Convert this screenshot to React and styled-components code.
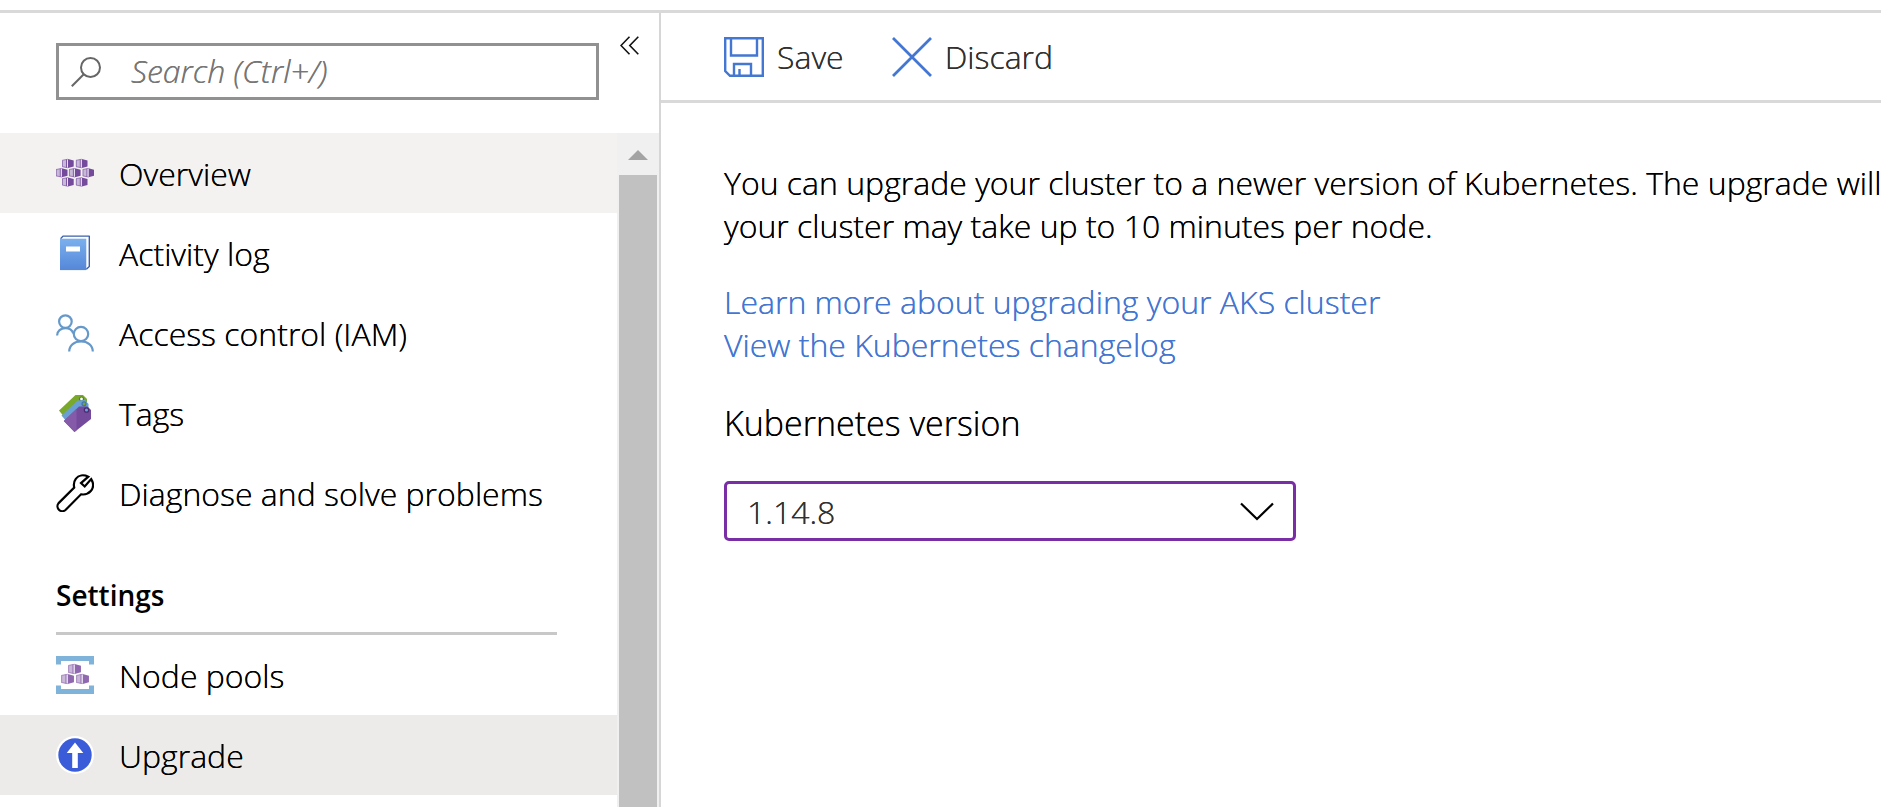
import React from "react";
import styled, { createGlobalStyle } from "styled-components";

const GlobalStyle = createGlobalStyle`
  * { box-sizing: border-box; }
  html, body { margin: 0; }
  body {
    background: #fff;
    color: #000;
    font-family: "Segoe UI", "Open Sans", "Noto Sans", sans-serif;
    font-size: 32px;
    font-weight: 350;
    line-height: 43px;
    text-shadow: 0 0 0 currentColor;
    overflow: hidden;
  }
  button, input, select { font: inherit; text-shadow: inherit; }
`;

const Page = styled.div`
  display: flex;
  flex-direction: column;
  height: 100vh;
  padding-top: 10px;
`;

const Shell = styled.div`
  flex: 1;
  min-height: 0;
  display: flex;
  border-top: 3px solid #d9d9d9;
`;

const Sidebar = styled.aside`
  flex: 0 0 661px;
  display: flex;
  flex-direction: column;
  border-right: 2px solid #d6d6d6;
`;

const SidebarHeader = styled.div`
  flex: none;
  display: flex;
  align-items: flex-start;
  gap: 21px;
  height: 120px;
  padding: 23px 20px 0 56px;
`;

const SearchBox = styled.label`
  flex: 1;
  display: flex;
  align-items: center;
  gap: 30px;
  height: 57px;
  margin-top: 7px;
  padding-left: 12px;
  border: 3px solid #919191;
`;

const SearchInput = styled.input`
  flex: 1;
  min-width: 0;
  padding: 0 0 2px;
  border: 0;
  outline: 0;
  background: transparent;
  &::placeholder { color: #767676; font-style: italic; opacity: 1; }
`;

const IconButton = styled.button`
  display: flex;
  padding: 0;
  border: 0;
  background: none;
`;

const SidebarBody = styled.div`
  flex: 1;
  min-height: 0;
  display: flex;
`;

const Nav = styled.nav`
  flex: 1;
  overflow: hidden;
`;

const NavItem = styled.a`
  display: flex;
  align-items: center;
  gap: 25px;
  height: 80px;
  padding-left: 56px;
  color: #000;
  text-decoration: none;
  background: ${(p) => p.$fill || "transparent"};
  svg { flex: none; }
`;

const SectionTitle = styled.h2`
  margin: 0 60px 0 56px;
  padding: 41px 0 15px;
  border-bottom: 3px solid #c8c8c8;
  font-size: 28px;
  font-weight: 600;
  text-shadow: none;
`;

const ScrollTrack = styled.div`
  flex: 0 0 42px;
  display: flex;
  flex-direction: column;
  align-items: center;
  padding: 0 2px;
  background: #f0f0f0;
`;

const ScrollArrow = styled.button`
  display: flex;
  align-items: center;
  justify-content: center;
  width: 100%;
  height: 42px;
  padding: 2px 0 0;
  border: 0;
  background: none;
`;

const ScrollThumb = styled.div`
  flex: 1;
  width: 100%;
  background: #c1c1c1;
`;

const Main = styled.main`
  flex: 1;
  min-width: 0;
  overflow: hidden;
`;

const Toolbar = styled.div`
  display: flex;
  align-items: center;
  gap: 48px;
  height: 90px;
  padding-left: 63px;
  border-bottom: 3px solid #d9d9d9;
`;

const ToolButton = styled.button`
  display: flex;
  align-items: center;
  gap: 13px;
  padding: 0;
  border: 0;
  background: none;
  color: #323130;
`;

const Content = styled.section`
  padding: 58px 0 0 63px;
`;

const Intro = styled.p`
  margin: 0 0 33px;
  white-space: nowrap;
`;

const Links = styled.div`
  display: flex;
  flex-direction: column;
  align-items: flex-start;
  margin-bottom: 36px;
`;

const Link = styled.a`
  color: #4377d2;
  text-decoration: none;
`;

const FieldLabel = styled.label`
  display: block;
  margin-bottom: 36px;
  font-size: 34px;
`;

const SelectWrap = styled.div`
  position: relative;
  width: 572px;
  max-width: 100%;
  svg { position: absolute; right: 22px; top: 20px; pointer-events: none; }
`;

const Select = styled.select`
  display: block;
  width: 100%;
  height: 60px;
  padding: 0 60px 0 20px;
  border: 3px solid #7a2ea6;
  border-radius: 5px;
  outline: 0;
  appearance: none;
  background: #fff;
  color: #323130;
`;

function Pod({ x, y, scale = 1, dark = "#744a9c" }) {
  return (
    <g transform={`translate(${x} ${y}) scale(${scale})`}>
      <path d="M0 1.4 5.500 0v9L0 7.700z" fill="#c9b9d9" />
      <path d="M5.800 0 11.500 1.500v6.100L5.800 9z" fill={dark} />
      <path d="M.3 1.400v6.200M0 1.300 5.800.2M0 7.700l5.800 1.100" stroke={dark} strokeWidth=".6" fill="none" />
      <path d="M4.300 .6v7.900" stroke={dark} strokeWidth=".9" />
      <path d="M5.300 .6v7.900" stroke="#efe9f5" strokeWidth=".8" />
    </g>
  );
}

const OverviewIcon = () => (
  <svg width="38" height="38" viewBox="0 0 38 38" aria-hidden="true">
    <Pod x={6.2} y={5} />
    <Pod x={20} y={5} />
    <Pod x={0} y={14.2} />
    <Pod x={13.1} y={14.2} />
    <Pod x={26.7} y={14.2} />
    <Pod x={6.2} y={23.4} />
    <Pod x={20} y={23.4} />
  </svg>
);

const LogIcon = () => (
  <svg width="38" height="38" viewBox="0 0 38 38" aria-hidden="true">
    <defs>
      <linearGradient id="cover" x1="0" y1="0" x2="0" y2="1">
        <stop offset="0" stopColor="#7bb0ee" />
        <stop offset="1" stopColor="#5587d8" />
      </linearGradient>
    </defs>
    <path d="M4.6 4.5 7 2.1h26.3v30.4l-2.8 2.9V4.9z" fill="#fff" />
    <path d="M4.6 4.8 7 2.1h26.3v30.4l-3 2.8" fill="none" stroke="#3a62ab" strokeWidth="1.4" strokeLinejoin="round" />
    <path d="M4 4.7h26.3v31.4H4z" fill="url(#cover)" />
    <path d="M10 12.5h14v5H10z" fill="#fff" />
  </svg>
);

const PeopleIcon = () => (
  <svg width="38" height="38" viewBox="0 0 38 38" fill="none" stroke="#6699ca" strokeWidth="2.2" aria-hidden="true">
    <circle cx="9.4" cy="7.6" r="6.3" />
    <path d="M1.1 21.5c0-4.6 3.7-7.4 8.3-7.4 4 0 6.7 2 7.9 5.2" />
    <circle cx="25" cy="20" r="7.2" />
    <path d="M13.2 37.5c0-6.3 5.3-10.2 11.8-10.2s11.8 3.9 11.8 10.2" />
  </svg>
);

const TagsIcon = () => (
  <svg width="38" height="38" viewBox="0 0 38 38" aria-hidden="true">
    <path d="M3 16.500 19.500 1h7.500l4 4v9L9 24z" fill="#79a82b" />
    <circle cx="25.500" cy="5" r="2" fill="#fff" stroke="#54821c" strokeWidth="1.200" />
    <path d="M5.500 21.500 21.500 6.500 29 6l3.500 4v9L11 28z" fill="#699fd2" />
    <circle cx="28" cy="9.800" r="2" fill="#7aa82c" stroke="#3f77b0" strokeWidth="1.200" />
    <path d="M7.800 27 23 12.500h8.500l3.500 3.500v9L18.500 38z" fill="#744a9c" />
    <path d="M7.800 27 20.500 15v21.500L18.500 38z" fill="#855ba9" />
    <circle cx="30.500" cy="16" r="2.200" fill="#699fd2" stroke="#4d2b73" strokeWidth="1.300" />
  </svg>
);

const WrenchIcon = () => (
  <svg width="38" height="38" viewBox="0 0 38 38" fill="none" stroke="#000" strokeWidth="2.2" aria-hidden="true">
    <path d="M32.300 2.700C27.500.300 22.500 1.200 19.800 4.800c-1.900 2.500-2.300 5.600-1.600 8.800L2.600 29.100a4.900 4.900 0 0 0 6.900 6.900L25 20.300c3.800.600 7.300-.4 9.800-3.200 2.700-3.200 2.800-8 .4-12l-6.500 7.400-3.700-3.400z" />
  </svg>
);

const NodePoolsIcon = () => (
  <svg width="38" height="38" viewBox="0 0 38 38" aria-hidden="true">
    <path d="M0 0h38v8.5h-5V5H5v3.500H0zM0 38h38v-8.500h-5V33H5v-3.500H0z" fill="#80b3da" />
    <Pod x={12.3} y={8} scale={1.1} dark="#9068b0" />
    <Pod x={5.3} y={18} scale={1.1} dark="#9068b0" />
    <Pod x={20.3} y={18} scale={1.1} dark="#9068b0" />
  </svg>
);

const UpgradeIcon = () => (
  <svg width="38" height="38" viewBox="0 0 38 38" aria-hidden="true">
    <circle cx="19" cy="19" r="19" fill="#fff" />
    <circle cx="19" cy="19" r="16.7" fill="#3a5cd8" />
    <path d="M19 6.500 27.300 17h-5.500v15h-5.600V17h-5.500z" fill="#fff" />
  </svg>
);

const SearchIcon = () => (
  <svg width="30" height="30" viewBox="0 0 30 30" fill="none" stroke="#666" strokeWidth="2" aria-hidden="true">
    <circle cx="19.500" cy="10.500" r="9.500" />
    <path d="M12.500 17.500.8 29.200" />
  </svg>
);

const CollapseIcon = () => (
  <svg width="19" height="19" viewBox="0 0 19 19" fill="none" stroke="#111" strokeWidth="1.6" aria-hidden="true">
    <path d="M9.500.7 1 9.500l8.500 8.800M18.300.7 9.800 9.500l8.500 8.800" />
  </svg>
);

const SaveIcon = () => (
  <svg width="40" height="40" viewBox="0 0 40 40" fill="none" stroke="#4377d2" strokeWidth="2.4" aria-hidden="true">
    <path d="M1.200 1.200h37.600v37.600H6l-4.800-4.800z" />
    <path d="M7 1v17.500h26V1M10 39V27h17v12M15.500 39v-7" />
  </svg>
);

const DiscardIcon = () => (
  <svg width="40" height="40" viewBox="0 0 40 40" fill="none" stroke="#4377d2" strokeWidth="2.8" aria-hidden="true">
    <path d="m1 1 38 38M39 1 1 39" />
  </svg>
);

const ChevronIcon = () => (
  <svg width="34" height="20" viewBox="0 0 34 20" fill="none" stroke="#000" strokeWidth="2.2" aria-hidden="true">
    <path d="m1 2.500 16 15.500 16-15.500" />
  </svg>
);

const generalItems = [
  { label: "Overview", Icon: OverviewIcon, fill: "#f3f2f1" },
  { label: "Activity log", Icon: LogIcon },
  { label: "Access control (IAM)", Icon: PeopleIcon },
  { label: "Tags", Icon: TagsIcon },
  { label: "Diagnose and solve problems", Icon: WrenchIcon },
];

const settingsItems = [
  { label: "Node pools", Icon: NodePoolsIcon },
  { label: "Upgrade", Icon: UpgradeIcon, fill: "#ecebea" },
];

const renderItem = ({ label, Icon, fill }) => (
  <NavItem key={label} href="#" $fill={fill}>
    <Icon />
    {label}
  </NavItem>
);

export default function App() {
  return (
    <Page>
      <GlobalStyle />
      <Shell>
        <Sidebar>
          <SidebarHeader>
            <SearchBox>
              <SearchIcon />
              <SearchInput type="text" placeholder="Search (Ctrl+/)" aria-label="Search" />
            </SearchBox>
            <IconButton type="button" aria-label="Collapse menu">
              <CollapseIcon />
            </IconButton>
          </SidebarHeader>
          <SidebarBody>
            <Nav>
              {generalItems.map(renderItem)}
              <SectionTitle>Settings</SectionTitle>
              {settingsItems.map(renderItem)}
            </Nav>
            <ScrollTrack>
              <ScrollArrow type="button" aria-label="Scroll up">
                <svg width="20" height="10" viewBox="0 0 20 10" aria-hidden="true">
                  <path d="M10 0 20 10H0z" fill="#a3a3a3" />
                </svg>
              </ScrollArrow>
              <ScrollThumb />
            </ScrollTrack>
          </SidebarBody>
        </Sidebar>
        <Main>
          <Toolbar>
            <ToolButton type="button">
              <SaveIcon />
              Save
            </ToolButton>
            <ToolButton type="button">
              <DiscardIcon />
              Discard
            </ToolButton>
          </Toolbar>
          <Content>
            <Intro>
              You can upgrade your cluster to a newer version of Kubernetes. The upgrade will
              <br />
              your cluster may take up to 10 minutes per node.
            </Intro>
            <Links>
              <Link href="#">Learn more about upgrading your AKS cluster</Link>
              <Link href="#">View the Kubernetes changelog</Link>
            </Links>
            <FieldLabel htmlFor="version">Kubernetes version</FieldLabel>
            <SelectWrap>
              <Select id="version" defaultValue="1.14.8">
                <option>1.14.8</option>
              </Select>
              <ChevronIcon />
            </SelectWrap>
          </Content>
        </Main>
      </Shell>
    </Page>
  );
}
